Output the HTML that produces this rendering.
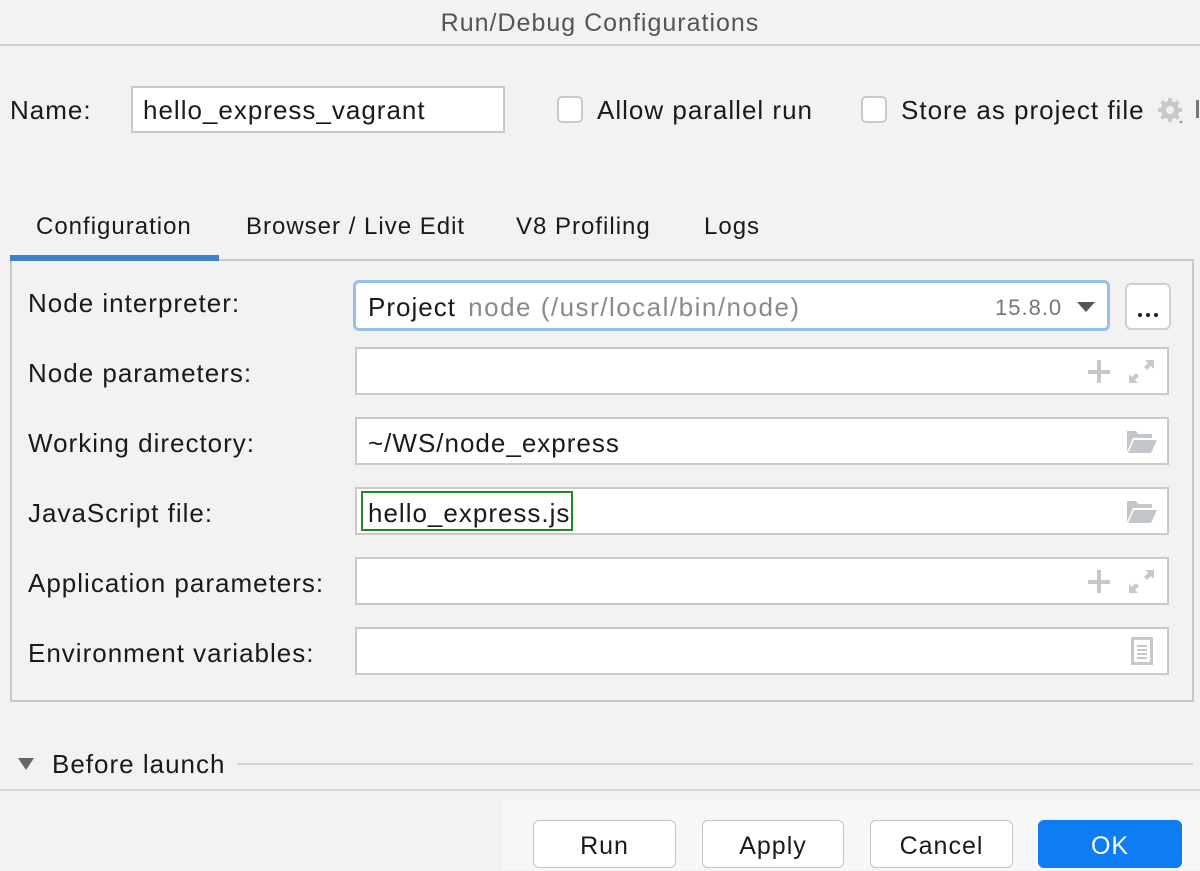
<!DOCTYPE html>
<html><head><style>
body{margin:0;width:1200px;height:870px;background:#f2f2f2;font-family:"Liberation Sans",sans-serif;font-size:26px;letter-spacing:1px;color:#1a1a1a;position:relative;overflow:hidden}
.a{position:absolute;white-space:nowrap}
.f{position:absolute;background:#fff;border:2px solid #c9c9c9;box-sizing:border-box}
.lbl{position:absolute;left:28px;line-height:28px}
.t{font-size:24px;letter-spacing:1px}
.btn{position:absolute;top:820px;height:48px;background:#fff;border:1px solid #c4c4c4;border-radius:6px;box-sizing:border-box;text-align:center;line-height:50px;font-size:25px}
</style></head><body>
<div class="a" style="left:0;width:1200px;top:8px;text-align:center;color:#555;font-size:25px;line-height:30px">Run/Debug Configurations</div>
<div class="a" style="left:0;top:44px;width:1200px;height:2px;background:#d0d0d0"></div>

<div class="a" style="left:10px;top:96px;line-height:28px">Name:</div>
<div class="f" style="left:131px;top:86px;width:374px;height:47px"></div>
<div class="a" style="left:143px;top:96px;line-height:28px">hello_express_vagrant</div>
<div class="f" style="left:557px;top:96px;width:26px;height:27px;border-radius:5px"></div>
<div class="a" style="left:597px;top:96px;line-height:28px">Allow parallel run</div>
<div class="f" style="left:861px;top:96px;width:26px;height:27px;border-radius:5px"></div>
<div class="a" style="left:901px;top:96px;line-height:28px">Store as project file</div>
<svg class="a" style="left:1156px;top:97px" width="30" height="30" viewBox="0 0 30 30"><g fill="#c6c9cc"><circle cx="14" cy="13" r="9"/><rect x="12" y="1" width="4" height="24"/><rect x="2" y="11" width="24" height="4"/><rect x="12" y="1" width="4" height="24" transform="rotate(45 14 13)"/><rect x="12" y="1" width="4" height="24" transform="rotate(-45 14 13)"/></g><circle cx="14" cy="13" r="4" fill="#f2f2f2"/><path d="M23 24l4 0-2 3z" fill="#999"/></svg>
<div class="a" style="left:1196px;top:100px;width:3px;height:18px;background:#777"></div>

<div class="a t" style="left:36px;top:212px;line-height:30px">Configuration</div>
<div class="a t" style="left:246px;top:212px;line-height:30px">Browser / Live Edit</div>
<div class="a t" style="left:516px;top:212px;line-height:30px">V8 Profiling</div>
<div class="a t" style="left:704px;top:212px;line-height:30px">Logs</div>
<div class="a" style="left:10px;top:259px;width:1184px;height:443px;border:2px solid #c9c9c9;box-sizing:border-box"></div>
<div class="a" style="left:10px;top:255px;width:209px;height:6px;background:#3d81cd"></div>

<div class="lbl" style="top:289px">Node interpreter:</div>
<div class="lbl" style="top:359px">Node parameters:</div>
<div class="lbl" style="top:429px">Working directory:</div>
<div class="lbl" style="top:499px">JavaScript file:</div>
<div class="lbl" style="top:569px">Application parameters:</div>
<div class="lbl" style="top:639px">Environment variables:</div>

<div class="a" style="left:353px;top:280px;width:757px;height:51px;background:#fff;border:3px solid #97c0ee;border-radius:6px;box-sizing:border-box"></div>
<div class="a" style="left:368px;top:293px;line-height:28px">Project <span style="color:#8a8a8a;margin-left:4px;letter-spacing:1.5px">node (/usr/local/bin/node)</span></div>
<div class="a" style="left:995px;top:295px;line-height:26px;color:#777;font-size:22px">15.8.0</div>
<svg class="a" style="left:1076px;top:301px" width="20" height="12"><path d="M1 1h18L10 11z" fill="#555"/></svg>
<div class="a" style="left:1125px;top:283px;width:46px;height:47px;background:#fff;border:2px solid #d0d0d0;border-radius:6px;box-sizing:border-box"></div>
<svg class="a" style="left:1136px;top:312px" width="26" height="6"><circle cx="4" cy="3" r="2" fill="#222"/><circle cx="12" cy="3" r="2" fill="#222"/><circle cx="20" cy="3" r="2" fill="#222"/></svg>

<div class="f" style="left:355px;top:347px;width:814px;height:48px"></div>
<div class="f" style="left:355px;top:417px;width:814px;height:48px"></div>
<div class="f" style="left:355px;top:487px;width:814px;height:48px"></div>
<div class="f" style="left:355px;top:557px;width:814px;height:48px"></div>
<div class="f" style="left:355px;top:627px;width:814px;height:48px"></div>

<svg class="a" style="left:1087px;top:359px" width="70" height="26"><g fill="#c6c9cc"><rect x="1" y="11" width="22" height="4"/><rect x="10" y="1" width="4" height="23"/><path d="M42 24v-9l3 3 4-4 3 3-4 4 3 3z M67 1v9l-3-3-4 4-3-3 4-4-3-3z"/></g></svg>
<svg class="a" style="left:1087px;top:569px" width="70" height="26"><g fill="#c6c9cc"><rect x="1" y="11" width="22" height="4"/><rect x="10" y="1" width="4" height="23"/><path d="M42 24v-9l3 3 4-4 3 3-4 4 3 3z M67 1v9l-3-3-4 4-3-3 4-4-3-3z"/></g></svg>
<div class="a" style="left:368px;top:429px;line-height:28px">~/WS/node_express</div>
<svg class="a" style="left:1126px;top:430px" width="32" height="24"><path d="M1 1h9l2 3h14v4H7L1 22z M8 10h23l-6 13H2z" fill="#c3c7cb"/></svg>
<div class="a" style="left:361px;top:491px;width:212px;height:40px;border:2px solid #1f8a1f;box-sizing:border-box"></div>
<div class="a" style="left:368px;top:499px;line-height:28px">hello_express.js</div>
<svg class="a" style="left:1126px;top:500px" width="32" height="24"><path d="M1 1h9l2 3h14v4H7L1 22z M8 10h23l-6 13H2z" fill="#c3c7cb"/></svg>
<svg class="a" style="left:1130px;top:636px" width="24" height="30"><rect x="1" y="1" width="22" height="28" fill="#c6c9cc"/><rect x="4" y="4" width="16" height="22" fill="#fff"/><g fill="#c6c9cc"><rect x="7" y="9" width="10" height="2"/><rect x="7" y="13" width="10" height="2"/><rect x="7" y="17" width="10" height="2"/><rect x="7" y="21" width="10" height="2"/></g></svg>

<svg class="a" style="left:17px;top:757px" width="18" height="14"><path d="M1 1h16L9 13z" fill="#666"/></svg>
<div class="a" style="left:52px;top:750px;line-height:28px">Before launch</div>
<div class="a" style="left:237px;top:763px;width:956px;height:2px;background:#d3d3d3"></div>
<div class="a" style="left:0;top:789px;width:1200px;height:2px;background:#d6d6d6"></div>
<div class="a" style="left:502px;top:800px;width:698px;height:70px;background:#f6f7f8"></div>

<div class="btn" style="left:533px;width:143px">Run</div>
<div class="btn" style="left:702px;width:142px">Apply</div>
<div class="btn" style="left:870px;width:143px">Cancel</div>
<div class="btn" style="left:1038px;width:144px;background:#0e7cf5;border-color:#0e7cf5;color:#fff">OK</div>
</body></html>
